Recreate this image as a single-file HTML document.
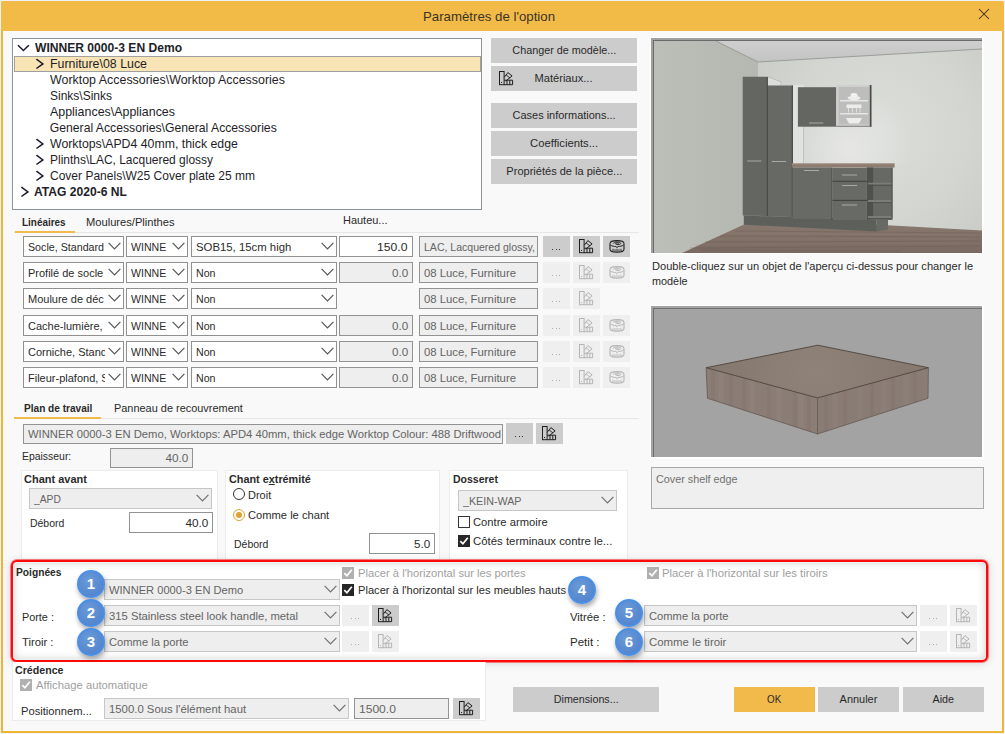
<!DOCTYPE html>
<html><head><meta charset="utf-8">
<style>
*{box-sizing:border-box;margin:0;padding:0}
html,body{width:1005px;height:734px;overflow:hidden;background:#eff2f9;font-family:"Liberation Sans",sans-serif;color:#2a2a2a;font-size:12px}
.a{position:absolute}
.t{position:absolute;white-space:nowrap;line-height:16px;font-size:12px;color:#2a2a2a}
</style></head><body>
<div class="a" style="left:1px;top:1px;width:1003px;height:732px;background:#f9f9f9;border:2px solid #f0b535;border-top:0;border-radius:2px 2px 0 0"></div>
<div class="a" style="left:1px;top:1px;width:1003px;height:30px;background:#f2bb48;border-radius:2px 2px 0 0"></div>

<div class="t" style="left:423px;top:9.00px;font-size:13px;color:#3a3328;"><span id="s0" style="display:inline-block;transform:scaleX(1.018);transform-origin:0 50%">Paramètres de l'option</span></div>
<svg class="a" style="left:978px;top:8px" width="12" height="12" viewBox="0 0 12 12"><path d="M1 1L11 11M11 1L1 11" stroke="#3a2a20" stroke-width="1.05"/></svg>
<div class="a" style="left:12px;top:38px;width:470px;height:172px;background:#fff;border:1px solid #8e939b"></div>
<div class="a" style="left:14px;top:56px;width:467px;height:16px;background:#f9e4b5;border:1px solid #a0a0a0"></div>
<svg class="a" style="left:17px;top:41px" width="13" height="13" viewBox="0 0 13 13"><path d="M1 4.3L6.4 9.5L11.8 4.3" fill="none" stroke="#1a1a2a" stroke-width="1.5"/></svg>
<div class="t" style="left:34.5px;top:40.14px;font-size:12px;font-weight:bold;color:#1e1e28;"><span id="s1" style="display:inline-block;transform:scaleX(1.007);transform-origin:0 50%">WINNER 0000-3 EN Demo</span></div>
<svg class="a" style="left:32px;top:57px" width="13" height="13" viewBox="0 0 13 13"><path d="M4.4 2.2L10.9 6.9L4.4 11.5" fill="none" stroke="#1a1a2a" stroke-width="1.5"/></svg>
<div class="t" style="left:49.8px;top:56.27px;font-size:12.2px;color:#1e1e28;"><span id="s2" style="display:inline-block;transform:scaleX(1.015);transform-origin:0 50%">Furniture\08 Luce</span></div>
<div class="t" style="left:49.8px;top:72.27px;font-size:12.2px;color:#1e1e28;"><span id="s3" style="display:inline-block;transform:scaleX(1.019);transform-origin:0 50%">Worktop Accessories\Worktop Accessories</span></div>
<div class="t" style="left:49.8px;top:88.27px;font-size:12.2px;color:#1e1e28;"><span id="s4" style="display:inline-block;transform:scaleX(0.984);transform-origin:0 50%">Sinks\Sinks</span></div>
<div class="t" style="left:49.8px;top:104.27px;font-size:12.2px;color:#1e1e28;"><span id="s5" style="display:inline-block;transform:scaleX(1.019);transform-origin:0 50%">Appliances\Appliances</span></div>
<div class="t" style="left:49.8px;top:120.27px;font-size:12.2px;color:#1e1e28;"><span id="s6" style="display:inline-block;transform:scaleX(1.000);transform-origin:0 50%">General Accessories\General Accessories</span></div>
<svg class="a" style="left:32px;top:137px" width="13" height="13" viewBox="0 0 13 13"><path d="M4.4 2.2L10.9 6.9L4.4 11.5" fill="none" stroke="#1a1a2a" stroke-width="1.5"/></svg>
<div class="t" style="left:49.8px;top:136.27px;font-size:12.2px;color:#1e1e28;"><span id="s7" style="display:inline-block;transform:scaleX(1.010);transform-origin:0 50%">Worktops\APD4 40mm, thick edge</span></div>
<svg class="a" style="left:32px;top:153px" width="13" height="13" viewBox="0 0 13 13"><path d="M4.4 2.2L10.9 6.9L4.4 11.5" fill="none" stroke="#1a1a2a" stroke-width="1.5"/></svg>
<div class="t" style="left:49.8px;top:152.27px;font-size:12.2px;color:#1e1e28;"><span id="s8" style="display:inline-block;transform:scaleX(0.982);transform-origin:0 50%">Plinths\LAC, Lacquered glossy</span></div>
<svg class="a" style="left:32px;top:169px" width="13" height="13" viewBox="0 0 13 13"><path d="M4.4 2.2L10.9 6.9L4.4 11.5" fill="none" stroke="#1a1a2a" stroke-width="1.5"/></svg>
<div class="t" style="left:49.8px;top:168.27px;font-size:12.2px;color:#1e1e28;"><span id="s9" style="display:inline-block;transform:scaleX(0.986);transform-origin:0 50%">Cover Panels\W25 Cover plate 25 mm</span></div>
<svg class="a" style="left:17px;top:185px" width="13" height="13" viewBox="0 0 13 13"><path d="M4.4 2.2L10.9 6.9L4.4 11.5" fill="none" stroke="#1a1a2a" stroke-width="1.5"/></svg>
<div class="t" style="left:34px;top:184.14px;font-size:12px;font-weight:bold;color:#1e1e28;"><span id="s10" style="display:inline-block;transform:scaleX(1.008);transform-origin:0 50%">ATAG 2020-6 NL</span></div>
<div class="a" style="left:491px;top:38px;width:146px;height:25px;background:#cccccc"></div>
<div class="t" style="left:491px;width:146px;text-align:center;top:42.08px;font-size:11.3px;color:#2a2a2a"><span id="s11" style="display:inline-block;transform:scaleX(0.957);transform-origin:50% 50%">Changer de modèle...</span></div>
<div class="a" style="left:491px;top:66px;width:146px;height:25px;background:#cccccc"></div>
<div class="t" style="left:491px;width:146px;text-align:center;top:70.08px;font-size:11.3px;color:#2a2a2a"><span id="s12" style="display:inline-block;transform:scaleX(0.983);transform-origin:50% 50%">Matériaux...</span></div>
<svg class="a" style="left:499px;top:71px" width="15" height="15" viewBox="0 0 15 15"><rect x="0.5" y="0.5" width="4.6" height="13.2" fill="none" stroke="#1e1e1e" stroke-width="1"/><rect x="2" y="11" width="1" height="1" fill="#1e1e1e"/><path d="M5.1 6.4L8.9 1.6L13.1 4.9L6.6 10.2" fill="none" stroke="#1e1e1e" stroke-width="1"/><path d="M7.1 3.9L11.1 7.1" stroke="#1e1e1e" stroke-width="0.9"/><path d="M5.1 9.2H13.6V13.7H5.1M8 9.4V13.6M10.8 9.4V13.6" fill="none" stroke="#1e1e1e" stroke-width="1"/></svg>
<div class="a" style="left:491px;top:103px;width:146px;height:25px;background:#cccccc"></div>
<div class="t" style="left:491px;width:146px;text-align:center;top:107.08px;font-size:11.3px;color:#2a2a2a"><span id="s13" style="display:inline-block;transform:scaleX(0.971);transform-origin:50% 50%">Cases informations...</span></div>
<div class="a" style="left:491px;top:131px;width:146px;height:25px;background:#cccccc"></div>
<div class="t" style="left:491px;width:146px;text-align:center;top:135.08px;font-size:11.3px;color:#2a2a2a"><span id="s14" style="display:inline-block;transform:scaleX(0.997);transform-origin:50% 50%">Coefficients...</span></div>
<div class="a" style="left:491px;top:159px;width:146px;height:25px;background:#cccccc"></div>
<div class="t" style="left:491px;width:146px;text-align:center;top:163.08px;font-size:11.3px;color:#2a2a2a"><span id="s15" style="display:inline-block;transform:scaleX(0.977);transform-origin:50% 50%">Propriétés de la pièce...</span></div>
<div class="t" style="left:22.3px;top:213.94px;font-size:11px;font-weight:bold;"><span id="s16" style="display:inline-block;transform:scaleX(0.902);transform-origin:0 50%">Linéaires</span></div>
<div class="t" style="left:86.4px;top:213.94px;font-size:11px;"><span id="s17" style="display:inline-block;transform:scaleX(1.013);transform-origin:0 50%">Moulures/Plinthes</span></div>
<div class="t" style="left:342.7px;top:211.94px;font-size:11px;"><span id="s18" style="display:inline-block;transform:scaleX(0.997);transform-origin:0 50%">Hauteu...</span></div>
<div class="a" style="left:14px;top:232px;width:625px;height:1px;background:#e6e6e6"></div>
<div class="a" style="left:15px;top:231px;width:60px;height:2px;background:#f2b94b"></div>
<div class="a" style="left:23px;top:236px;width:101px;height:21px;background:#ffffff;border:1px solid #909090"></div>
<div class="t" style="left:28px;top:238.69px;font-size:11px;color:#2a2a2a;width:77px;overflow:hidden"><span id="s19" style="display:inline-block;transform:scaleX(0.971);transform-origin:0 50%">Socle, Standard</span></div>
<svg class="a" style="left:108px;top:242.3px" width="13" height="8" viewBox="0 0 13 8"><path d="M0.6 0.8L6.5 6.8L12.4 0.8" fill="none" stroke="#555" stroke-width="1.2"/></svg>
<div class="a" style="left:126px;top:236px;width:62px;height:21px;background:#ffffff;border:1px solid #909090"></div>
<div class="t" style="left:131px;top:238.69px;font-size:11px;color:#2a2a2a;width:40px;overflow:hidden"><span id="s20" style="display:inline-block;transform:scaleX(0.963);transform-origin:0 50%">WINNE</span></div>
<svg class="a" style="left:172px;top:242.3px" width="13" height="8" viewBox="0 0 13 8"><path d="M0.6 0.8L6.5 6.8L12.4 0.8" fill="none" stroke="#555" stroke-width="1.2"/></svg>
<div class="a" style="left:191px;top:236px;width:146px;height:21px;background:#ffffff;border:1px solid #909090"></div>
<div class="t" style="left:196px;top:238.69px;font-size:11px;color:#2a2a2a;width:124px;overflow:hidden"><span id="s21" style="display:inline-block;transform:scaleX(1.032);transform-origin:0 50%">SOB15, 15cm high</span></div>
<svg class="a" style="left:321px;top:242.3px" width="13" height="8" viewBox="0 0 13 8"><path d="M0.6 0.8L6.5 6.8L12.4 0.8" fill="none" stroke="#555" stroke-width="1.2"/></svg>
<div class="a" style="left:339px;top:236px;width:74px;height:21px;background:#ffffff;border:1px solid #939393"></div>
<div class="t" style="left:339px;width:69px;text-align:right;top:238.69px;font-size:11px;color:#2a2a2a"><span id="s22" style="display:inline-block;transform:scaleX(1.108);transform-origin:100% 50%">150.0</span></div>
<div class="a" style="left:419px;top:236px;width:119px;height:21px;background:#eeeeee;border:1px solid #939393"></div>
<div class="t" style="left:424px;width:112px;overflow:hidden;top:238.69px;font-size:11px;color:#646464"><span id="s23" style="display:inline-block;transform:scaleX(0.957);transform-origin:0 50%">LAC, Lacquered glossy,</span></div>
<div class="a" style="left:543px;top:236px;width:27px;height:21px;background:#cccccc"></div>
<div class="a" style="left:552.0px;top:249px;width:1.2px;height:1.2px;background:#3a3a3a"></div>
<div class="a" style="left:555.5px;top:249px;width:1.2px;height:1.2px;background:#3a3a3a"></div>
<div class="a" style="left:559.0px;top:249px;width:1.2px;height:1.2px;background:#3a3a3a"></div>
<div class="a" style="left:573px;top:236px;width:27px;height:21px;background:#cccccc"></div>
<svg class="a" style="left:579px;top:239.0px" width="15" height="15" viewBox="0 0 15 15"><rect x="0.5" y="0.5" width="4.6" height="13.2" fill="none" stroke="#1e1e1e" stroke-width="1"/><rect x="2" y="11" width="1" height="1" fill="#1e1e1e"/><path d="M5.1 6.4L8.9 1.6L13.1 4.9L6.6 10.2" fill="none" stroke="#1e1e1e" stroke-width="1"/><path d="M7.1 3.9L11.1 7.1" stroke="#1e1e1e" stroke-width="0.9"/><path d="M5.1 9.2H13.6V13.7H5.1M8 9.4V13.6M10.8 9.4V13.6" fill="none" stroke="#1e1e1e" stroke-width="1"/></svg>
<div class="a" style="left:603px;top:236px;width:27px;height:21px;background:#cccccc"></div>
<svg class="a" style="left:609px;top:239px" width="16" height="14" viewBox="0 0 16 14"><path d="M1 4.5C1 0.6 15 0.6 15 4.5" fill="none" stroke="#1e1e1e" stroke-width="1.1"/><path d="M1 4.5V10.3C1 12.8 4 13.3 8 13.3C12 13.3 15 12.8 15 10.3V4.5" fill="none" stroke="#1e1e1e" stroke-width="1.1"/><path d="M1.4 6C3 7.2 5.5 7.5 6.8 7.5L8 8.6L9.2 7.5C10.5 7.5 13 7.2 14.6 6" fill="none" stroke="#1e1e1e" stroke-width="1"/><path d="M4.3 4.6C4.3 2.5 11.7 2.5 11.7 4.4C11.7 5.9 6.4 6.1 6.4 4.5C6.4 3.9 9.1 3.8 9.6 4.4" fill="none" stroke="#1e1e1e" stroke-width="1"/><path d="M4 9.8V12.2M6 10.3V12.8M8 9.8V13M10 10.3V12.8M12 9.8V12.2" stroke="#1e1e1e" stroke-width="0.9"/></svg>
<div class="a" style="left:23px;top:262px;width:101px;height:21px;background:#ffffff;border:1px solid #909090"></div>
<div class="t" style="left:28px;top:264.69px;font-size:11px;color:#2a2a2a;width:77px;overflow:hidden">Profilé de socle</div>
<svg class="a" style="left:108px;top:268.3px" width="13" height="8" viewBox="0 0 13 8"><path d="M0.6 0.8L6.5 6.8L12.4 0.8" fill="none" stroke="#555" stroke-width="1.2"/></svg>
<div class="a" style="left:126px;top:262px;width:62px;height:21px;background:#ffffff;border:1px solid #909090"></div>
<div class="t" style="left:131px;top:264.69px;font-size:11px;color:#2a2a2a;width:40px;overflow:hidden"><span id="s24" style="display:inline-block;transform:scaleX(0.963);transform-origin:0 50%">WINNE</span></div>
<svg class="a" style="left:172px;top:268.3px" width="13" height="8" viewBox="0 0 13 8"><path d="M0.6 0.8L6.5 6.8L12.4 0.8" fill="none" stroke="#555" stroke-width="1.2"/></svg>
<div class="a" style="left:191px;top:262px;width:146px;height:21px;background:#ffffff;border:1px solid #909090"></div>
<div class="t" style="left:196px;top:264.69px;font-size:11px;color:#2a2a2a;width:124px;overflow:hidden"><span id="s25" style="display:inline-block;transform:scaleX(0.966);transform-origin:0 50%">Non</span></div>
<svg class="a" style="left:321px;top:268.3px" width="13" height="8" viewBox="0 0 13 8"><path d="M0.6 0.8L6.5 6.8L12.4 0.8" fill="none" stroke="#555" stroke-width="1.2"/></svg>
<div class="a" style="left:339px;top:262px;width:74px;height:21px;background:#eeeeee;border:1px solid #939393"></div>
<div class="t" style="left:339px;width:69px;text-align:right;top:264.69px;font-size:11px;color:#646464"><span id="s26" style="display:inline-block;transform:scaleX(1.059);transform-origin:100% 50%">0.0</span></div>
<div class="a" style="left:419px;top:262px;width:119px;height:21px;background:#eeeeee;border:1px solid #939393"></div>
<div class="t" style="left:424px;width:112px;overflow:hidden;top:264.69px;font-size:11px;color:#646464"><span id="s27" style="display:inline-block;transform:scaleX(1.030);transform-origin:0 50%">08 Luce, Furniture</span></div>
<div class="a" style="left:543px;top:262px;width:27px;height:21px;background:#efefef"></div>
<div class="a" style="left:552.0px;top:275px;width:1.2px;height:1.2px;background:#b0b0b0"></div>
<div class="a" style="left:555.5px;top:275px;width:1.2px;height:1.2px;background:#b0b0b0"></div>
<div class="a" style="left:559.0px;top:275px;width:1.2px;height:1.2px;background:#b0b0b0"></div>
<div class="a" style="left:573px;top:262px;width:27px;height:21px;background:#efefef"></div>
<svg class="a" style="left:579px;top:265.0px" width="15" height="15" viewBox="0 0 15 15"><rect x="0.5" y="0.5" width="4.6" height="13.2" fill="none" stroke="#b4b4b4" stroke-width="1"/><rect x="2" y="11" width="1" height="1" fill="#b4b4b4"/><path d="M5.1 6.4L8.9 1.6L13.1 4.9L6.6 10.2" fill="none" stroke="#b4b4b4" stroke-width="1"/><path d="M7.1 3.9L11.1 7.1" stroke="#b4b4b4" stroke-width="0.9"/><path d="M5.1 9.2H13.6V13.7H5.1M8 9.4V13.6M10.8 9.4V13.6" fill="none" stroke="#b4b4b4" stroke-width="1"/></svg>
<div class="a" style="left:603px;top:262px;width:27px;height:21px;background:#efefef"></div>
<svg class="a" style="left:609px;top:265px" width="16" height="14" viewBox="0 0 16 14"><path d="M1 4.5C1 0.6 15 0.6 15 4.5" fill="none" stroke="#b4b4b4" stroke-width="1.1"/><path d="M1 4.5V10.3C1 12.8 4 13.3 8 13.3C12 13.3 15 12.8 15 10.3V4.5" fill="none" stroke="#b4b4b4" stroke-width="1.1"/><path d="M1.4 6C3 7.2 5.5 7.5 6.8 7.5L8 8.6L9.2 7.5C10.5 7.5 13 7.2 14.6 6" fill="none" stroke="#b4b4b4" stroke-width="1"/><path d="M4.3 4.6C4.3 2.5 11.7 2.5 11.7 4.4C11.7 5.9 6.4 6.1 6.4 4.5C6.4 3.9 9.1 3.8 9.6 4.4" fill="none" stroke="#b4b4b4" stroke-width="1"/><path d="M4 9.8V12.2M6 10.3V12.8M8 9.8V13M10 10.3V12.8M12 9.8V12.2" stroke="#b4b4b4" stroke-width="0.9"/></svg>
<div class="a" style="left:23px;top:288px;width:101px;height:21px;background:#ffffff;border:1px solid #909090"></div>
<div class="t" style="left:28px;top:290.69px;font-size:11px;color:#2a2a2a;width:77px;overflow:hidden">Moulure de déc</div>
<svg class="a" style="left:108px;top:294.3px" width="13" height="8" viewBox="0 0 13 8"><path d="M0.6 0.8L6.5 6.8L12.4 0.8" fill="none" stroke="#555" stroke-width="1.2"/></svg>
<div class="a" style="left:126px;top:288px;width:62px;height:21px;background:#ffffff;border:1px solid #909090"></div>
<div class="t" style="left:131px;top:290.69px;font-size:11px;color:#2a2a2a;width:40px;overflow:hidden"><span id="s28" style="display:inline-block;transform:scaleX(0.963);transform-origin:0 50%">WINNE</span></div>
<svg class="a" style="left:172px;top:294.3px" width="13" height="8" viewBox="0 0 13 8"><path d="M0.6 0.8L6.5 6.8L12.4 0.8" fill="none" stroke="#555" stroke-width="1.2"/></svg>
<div class="a" style="left:191px;top:288px;width:146px;height:21px;background:#ffffff;border:1px solid #909090"></div>
<div class="t" style="left:196px;top:290.69px;font-size:11px;color:#2a2a2a;width:124px;overflow:hidden"><span id="s29" style="display:inline-block;transform:scaleX(0.966);transform-origin:0 50%">Non</span></div>
<svg class="a" style="left:321px;top:294.3px" width="13" height="8" viewBox="0 0 13 8"><path d="M0.6 0.8L6.5 6.8L12.4 0.8" fill="none" stroke="#555" stroke-width="1.2"/></svg>
<div class="a" style="left:419px;top:288px;width:119px;height:21px;background:#eeeeee;border:1px solid #939393"></div>
<div class="t" style="left:424px;width:112px;overflow:hidden;top:290.69px;font-size:11px;color:#646464"><span id="s30" style="display:inline-block;transform:scaleX(1.030);transform-origin:0 50%">08 Luce, Furniture</span></div>
<div class="a" style="left:543px;top:288px;width:27px;height:21px;background:#efefef"></div>
<div class="a" style="left:552.0px;top:301px;width:1.2px;height:1.2px;background:#b0b0b0"></div>
<div class="a" style="left:555.5px;top:301px;width:1.2px;height:1.2px;background:#b0b0b0"></div>
<div class="a" style="left:559.0px;top:301px;width:1.2px;height:1.2px;background:#b0b0b0"></div>
<div class="a" style="left:573px;top:288px;width:27px;height:21px;background:#efefef"></div>
<svg class="a" style="left:579px;top:291.0px" width="15" height="15" viewBox="0 0 15 15"><rect x="0.5" y="0.5" width="4.6" height="13.2" fill="none" stroke="#b4b4b4" stroke-width="1"/><rect x="2" y="11" width="1" height="1" fill="#b4b4b4"/><path d="M5.1 6.4L8.9 1.6L13.1 4.9L6.6 10.2" fill="none" stroke="#b4b4b4" stroke-width="1"/><path d="M7.1 3.9L11.1 7.1" stroke="#b4b4b4" stroke-width="0.9"/><path d="M5.1 9.2H13.6V13.7H5.1M8 9.4V13.6M10.8 9.4V13.6" fill="none" stroke="#b4b4b4" stroke-width="1"/></svg>
<div class="a" style="left:23px;top:315px;width:101px;height:21px;background:#ffffff;border:1px solid #909090"></div>
<div class="t" style="left:28px;top:317.69px;font-size:11px;color:#2a2a2a;width:77px;overflow:hidden">Cache-lumière,</div>
<svg class="a" style="left:108px;top:321.3px" width="13" height="8" viewBox="0 0 13 8"><path d="M0.6 0.8L6.5 6.8L12.4 0.8" fill="none" stroke="#555" stroke-width="1.2"/></svg>
<div class="a" style="left:126px;top:315px;width:62px;height:21px;background:#ffffff;border:1px solid #909090"></div>
<div class="t" style="left:131px;top:317.69px;font-size:11px;color:#2a2a2a;width:40px;overflow:hidden"><span id="s31" style="display:inline-block;transform:scaleX(0.963);transform-origin:0 50%">WINNE</span></div>
<svg class="a" style="left:172px;top:321.3px" width="13" height="8" viewBox="0 0 13 8"><path d="M0.6 0.8L6.5 6.8L12.4 0.8" fill="none" stroke="#555" stroke-width="1.2"/></svg>
<div class="a" style="left:191px;top:315px;width:146px;height:21px;background:#ffffff;border:1px solid #909090"></div>
<div class="t" style="left:196px;top:317.69px;font-size:11px;color:#2a2a2a;width:124px;overflow:hidden"><span id="s32" style="display:inline-block;transform:scaleX(0.966);transform-origin:0 50%">Non</span></div>
<svg class="a" style="left:321px;top:321.3px" width="13" height="8" viewBox="0 0 13 8"><path d="M0.6 0.8L6.5 6.8L12.4 0.8" fill="none" stroke="#555" stroke-width="1.2"/></svg>
<div class="a" style="left:339px;top:315px;width:74px;height:21px;background:#eeeeee;border:1px solid #939393"></div>
<div class="t" style="left:339px;width:69px;text-align:right;top:317.69px;font-size:11px;color:#646464"><span id="s33" style="display:inline-block;transform:scaleX(1.059);transform-origin:100% 50%">0.0</span></div>
<div class="a" style="left:419px;top:315px;width:119px;height:21px;background:#eeeeee;border:1px solid #939393"></div>
<div class="t" style="left:424px;width:112px;overflow:hidden;top:317.69px;font-size:11px;color:#646464"><span id="s34" style="display:inline-block;transform:scaleX(1.030);transform-origin:0 50%">08 Luce, Furniture</span></div>
<div class="a" style="left:543px;top:315px;width:27px;height:21px;background:#efefef"></div>
<div class="a" style="left:552.0px;top:328px;width:1.2px;height:1.2px;background:#b0b0b0"></div>
<div class="a" style="left:555.5px;top:328px;width:1.2px;height:1.2px;background:#b0b0b0"></div>
<div class="a" style="left:559.0px;top:328px;width:1.2px;height:1.2px;background:#b0b0b0"></div>
<div class="a" style="left:573px;top:315px;width:27px;height:21px;background:#efefef"></div>
<svg class="a" style="left:579px;top:318.0px" width="15" height="15" viewBox="0 0 15 15"><rect x="0.5" y="0.5" width="4.6" height="13.2" fill="none" stroke="#b4b4b4" stroke-width="1"/><rect x="2" y="11" width="1" height="1" fill="#b4b4b4"/><path d="M5.1 6.4L8.9 1.6L13.1 4.9L6.6 10.2" fill="none" stroke="#b4b4b4" stroke-width="1"/><path d="M7.1 3.9L11.1 7.1" stroke="#b4b4b4" stroke-width="0.9"/><path d="M5.1 9.2H13.6V13.7H5.1M8 9.4V13.6M10.8 9.4V13.6" fill="none" stroke="#b4b4b4" stroke-width="1"/></svg>
<div class="a" style="left:603px;top:315px;width:27px;height:21px;background:#efefef"></div>
<svg class="a" style="left:609px;top:318px" width="16" height="14" viewBox="0 0 16 14"><path d="M1 4.5C1 0.6 15 0.6 15 4.5" fill="none" stroke="#b4b4b4" stroke-width="1.1"/><path d="M1 4.5V10.3C1 12.8 4 13.3 8 13.3C12 13.3 15 12.8 15 10.3V4.5" fill="none" stroke="#b4b4b4" stroke-width="1.1"/><path d="M1.4 6C3 7.2 5.5 7.5 6.8 7.5L8 8.6L9.2 7.5C10.5 7.5 13 7.2 14.6 6" fill="none" stroke="#b4b4b4" stroke-width="1"/><path d="M4.3 4.6C4.3 2.5 11.7 2.5 11.7 4.4C11.7 5.9 6.4 6.1 6.4 4.5C6.4 3.9 9.1 3.8 9.6 4.4" fill="none" stroke="#b4b4b4" stroke-width="1"/><path d="M4 9.8V12.2M6 10.3V12.8M8 9.8V13M10 10.3V12.8M12 9.8V12.2" stroke="#b4b4b4" stroke-width="0.9"/></svg>
<div class="a" style="left:23px;top:341px;width:101px;height:21px;background:#ffffff;border:1px solid #909090"></div>
<div class="t" style="left:28px;top:343.69px;font-size:11px;color:#2a2a2a;width:77px;overflow:hidden">Corniche, Standard</div>
<svg class="a" style="left:108px;top:347.3px" width="13" height="8" viewBox="0 0 13 8"><path d="M0.6 0.8L6.5 6.8L12.4 0.8" fill="none" stroke="#555" stroke-width="1.2"/></svg>
<div class="a" style="left:126px;top:341px;width:62px;height:21px;background:#ffffff;border:1px solid #909090"></div>
<div class="t" style="left:131px;top:343.69px;font-size:11px;color:#2a2a2a;width:40px;overflow:hidden"><span id="s35" style="display:inline-block;transform:scaleX(0.963);transform-origin:0 50%">WINNE</span></div>
<svg class="a" style="left:172px;top:347.3px" width="13" height="8" viewBox="0 0 13 8"><path d="M0.6 0.8L6.5 6.8L12.4 0.8" fill="none" stroke="#555" stroke-width="1.2"/></svg>
<div class="a" style="left:191px;top:341px;width:146px;height:21px;background:#ffffff;border:1px solid #909090"></div>
<div class="t" style="left:196px;top:343.69px;font-size:11px;color:#2a2a2a;width:124px;overflow:hidden"><span id="s36" style="display:inline-block;transform:scaleX(0.966);transform-origin:0 50%">Non</span></div>
<svg class="a" style="left:321px;top:347.3px" width="13" height="8" viewBox="0 0 13 8"><path d="M0.6 0.8L6.5 6.8L12.4 0.8" fill="none" stroke="#555" stroke-width="1.2"/></svg>
<div class="a" style="left:339px;top:341px;width:74px;height:21px;background:#eeeeee;border:1px solid #939393"></div>
<div class="t" style="left:339px;width:69px;text-align:right;top:343.69px;font-size:11px;color:#646464"><span id="s37" style="display:inline-block;transform:scaleX(1.059);transform-origin:100% 50%">0.0</span></div>
<div class="a" style="left:419px;top:341px;width:119px;height:21px;background:#eeeeee;border:1px solid #939393"></div>
<div class="t" style="left:424px;width:112px;overflow:hidden;top:343.69px;font-size:11px;color:#646464"><span id="s38" style="display:inline-block;transform:scaleX(1.030);transform-origin:0 50%">08 Luce, Furniture</span></div>
<div class="a" style="left:543px;top:341px;width:27px;height:21px;background:#efefef"></div>
<div class="a" style="left:552.0px;top:354px;width:1.2px;height:1.2px;background:#b0b0b0"></div>
<div class="a" style="left:555.5px;top:354px;width:1.2px;height:1.2px;background:#b0b0b0"></div>
<div class="a" style="left:559.0px;top:354px;width:1.2px;height:1.2px;background:#b0b0b0"></div>
<div class="a" style="left:573px;top:341px;width:27px;height:21px;background:#efefef"></div>
<svg class="a" style="left:579px;top:344.0px" width="15" height="15" viewBox="0 0 15 15"><rect x="0.5" y="0.5" width="4.6" height="13.2" fill="none" stroke="#b4b4b4" stroke-width="1"/><rect x="2" y="11" width="1" height="1" fill="#b4b4b4"/><path d="M5.1 6.4L8.9 1.6L13.1 4.9L6.6 10.2" fill="none" stroke="#b4b4b4" stroke-width="1"/><path d="M7.1 3.9L11.1 7.1" stroke="#b4b4b4" stroke-width="0.9"/><path d="M5.1 9.2H13.6V13.7H5.1M8 9.4V13.6M10.8 9.4V13.6" fill="none" stroke="#b4b4b4" stroke-width="1"/></svg>
<div class="a" style="left:603px;top:341px;width:27px;height:21px;background:#efefef"></div>
<svg class="a" style="left:609px;top:344px" width="16" height="14" viewBox="0 0 16 14"><path d="M1 4.5C1 0.6 15 0.6 15 4.5" fill="none" stroke="#b4b4b4" stroke-width="1.1"/><path d="M1 4.5V10.3C1 12.8 4 13.3 8 13.3C12 13.3 15 12.8 15 10.3V4.5" fill="none" stroke="#b4b4b4" stroke-width="1.1"/><path d="M1.4 6C3 7.2 5.5 7.5 6.8 7.5L8 8.6L9.2 7.5C10.5 7.5 13 7.2 14.6 6" fill="none" stroke="#b4b4b4" stroke-width="1"/><path d="M4.3 4.6C4.3 2.5 11.7 2.5 11.7 4.4C11.7 5.9 6.4 6.1 6.4 4.5C6.4 3.9 9.1 3.8 9.6 4.4" fill="none" stroke="#b4b4b4" stroke-width="1"/><path d="M4 9.8V12.2M6 10.3V12.8M8 9.8V13M10 10.3V12.8M12 9.8V12.2" stroke="#b4b4b4" stroke-width="0.9"/></svg>
<div class="a" style="left:23px;top:367px;width:101px;height:21px;background:#ffffff;border:1px solid #909090"></div>
<div class="t" style="left:28px;top:369.69px;font-size:11px;color:#2a2a2a;width:77px;overflow:hidden">Fileur-plafond, Standard</div>
<svg class="a" style="left:108px;top:373.3px" width="13" height="8" viewBox="0 0 13 8"><path d="M0.6 0.8L6.5 6.8L12.4 0.8" fill="none" stroke="#555" stroke-width="1.2"/></svg>
<div class="a" style="left:126px;top:367px;width:62px;height:21px;background:#ffffff;border:1px solid #909090"></div>
<div class="t" style="left:131px;top:369.69px;font-size:11px;color:#2a2a2a;width:40px;overflow:hidden"><span id="s39" style="display:inline-block;transform:scaleX(0.963);transform-origin:0 50%">WINNE</span></div>
<svg class="a" style="left:172px;top:373.3px" width="13" height="8" viewBox="0 0 13 8"><path d="M0.6 0.8L6.5 6.8L12.4 0.8" fill="none" stroke="#555" stroke-width="1.2"/></svg>
<div class="a" style="left:191px;top:367px;width:146px;height:21px;background:#ffffff;border:1px solid #909090"></div>
<div class="t" style="left:196px;top:369.69px;font-size:11px;color:#2a2a2a;width:124px;overflow:hidden"><span id="s40" style="display:inline-block;transform:scaleX(0.966);transform-origin:0 50%">Non</span></div>
<svg class="a" style="left:321px;top:373.3px" width="13" height="8" viewBox="0 0 13 8"><path d="M0.6 0.8L6.5 6.8L12.4 0.8" fill="none" stroke="#555" stroke-width="1.2"/></svg>
<div class="a" style="left:339px;top:367px;width:74px;height:21px;background:#eeeeee;border:1px solid #939393"></div>
<div class="t" style="left:339px;width:69px;text-align:right;top:369.69px;font-size:11px;color:#646464"><span id="s41" style="display:inline-block;transform:scaleX(1.059);transform-origin:100% 50%">0.0</span></div>
<div class="a" style="left:419px;top:367px;width:119px;height:21px;background:#eeeeee;border:1px solid #939393"></div>
<div class="t" style="left:424px;width:112px;overflow:hidden;top:369.69px;font-size:11px;color:#646464"><span id="s42" style="display:inline-block;transform:scaleX(1.030);transform-origin:0 50%">08 Luce, Furniture</span></div>
<div class="a" style="left:543px;top:367px;width:27px;height:21px;background:#efefef"></div>
<div class="a" style="left:552.0px;top:380px;width:1.2px;height:1.2px;background:#b0b0b0"></div>
<div class="a" style="left:555.5px;top:380px;width:1.2px;height:1.2px;background:#b0b0b0"></div>
<div class="a" style="left:559.0px;top:380px;width:1.2px;height:1.2px;background:#b0b0b0"></div>
<div class="a" style="left:573px;top:367px;width:27px;height:21px;background:#efefef"></div>
<svg class="a" style="left:579px;top:370.0px" width="15" height="15" viewBox="0 0 15 15"><rect x="0.5" y="0.5" width="4.6" height="13.2" fill="none" stroke="#b4b4b4" stroke-width="1"/><rect x="2" y="11" width="1" height="1" fill="#b4b4b4"/><path d="M5.1 6.4L8.9 1.6L13.1 4.9L6.6 10.2" fill="none" stroke="#b4b4b4" stroke-width="1"/><path d="M7.1 3.9L11.1 7.1" stroke="#b4b4b4" stroke-width="0.9"/><path d="M5.1 9.2H13.6V13.7H5.1M8 9.4V13.6M10.8 9.4V13.6" fill="none" stroke="#b4b4b4" stroke-width="1"/></svg>
<div class="a" style="left:603px;top:367px;width:27px;height:21px;background:#efefef"></div>
<svg class="a" style="left:609px;top:370px" width="16" height="14" viewBox="0 0 16 14"><path d="M1 4.5C1 0.6 15 0.6 15 4.5" fill="none" stroke="#b4b4b4" stroke-width="1.1"/><path d="M1 4.5V10.3C1 12.8 4 13.3 8 13.3C12 13.3 15 12.8 15 10.3V4.5" fill="none" stroke="#b4b4b4" stroke-width="1.1"/><path d="M1.4 6C3 7.2 5.5 7.5 6.8 7.5L8 8.6L9.2 7.5C10.5 7.5 13 7.2 14.6 6" fill="none" stroke="#b4b4b4" stroke-width="1"/><path d="M4.3 4.6C4.3 2.5 11.7 2.5 11.7 4.4C11.7 5.9 6.4 6.1 6.4 4.5C6.4 3.9 9.1 3.8 9.6 4.4" fill="none" stroke="#b4b4b4" stroke-width="1"/><path d="M4 9.8V12.2M6 10.3V12.8M8 9.8V13M10 10.3V12.8M12 9.8V12.2" stroke="#b4b4b4" stroke-width="0.9"/></svg>
<div class="t" style="left:23.6px;top:400.24px;font-size:11px;font-weight:bold;"><span id="s43" style="display:inline-block;transform:scaleX(0.917);transform-origin:0 50%">Plan de travail</span></div>
<div class="t" style="left:114.4px;top:400.24px;font-size:11px;"><span id="s44" style="display:inline-block;transform:scaleX(0.994);transform-origin:0 50%">Panneau de recouvrement</span></div>
<div class="a" style="left:14px;top:418px;width:625px;height:1px;background:#e6e6e6"></div>
<div class="a" style="left:14px;top:417px;width:87px;height:2px;background:#f2b94b"></div>
<div class="a" style="left:23px;top:424px;width:480px;height:20px;background:#eeeeee;border:1px solid #939393"></div>
<div class="t" style="left:28px;width:473px;overflow:hidden;top:426.19px;font-size:11px;color:#646464"><span id="s45" style="display:inline-block;transform:scaleX(1.023);transform-origin:0 50%">WINNER 0000-3 EN Demo, Worktops: APD4 40mm, thick edge Worktop Colour: 488 Driftwood</span></div>
<div class="a" style="left:506px;top:423px;width:27px;height:21px;background:#cccccc"></div>
<div class="a" style="left:515.0px;top:436px;width:1.2px;height:1.2px;background:#3a3a3a"></div>
<div class="a" style="left:518.5px;top:436px;width:1.2px;height:1.2px;background:#3a3a3a"></div>
<div class="a" style="left:522.0px;top:436px;width:1.2px;height:1.2px;background:#3a3a3a"></div>
<div class="a" style="left:536px;top:423px;width:27px;height:21px;background:#cccccc"></div>
<svg class="a" style="left:542px;top:426.0px" width="15" height="15" viewBox="0 0 15 15"><rect x="0.5" y="0.5" width="4.6" height="13.2" fill="none" stroke="#1e1e1e" stroke-width="1"/><rect x="2" y="11" width="1" height="1" fill="#1e1e1e"/><path d="M5.1 6.4L8.9 1.6L13.1 4.9L6.6 10.2" fill="none" stroke="#1e1e1e" stroke-width="1"/><path d="M7.1 3.9L11.1 7.1" stroke="#1e1e1e" stroke-width="0.9"/><path d="M5.1 9.2H13.6V13.7H5.1M8 9.4V13.6M10.8 9.4V13.6" fill="none" stroke="#1e1e1e" stroke-width="1"/></svg>
<div class="t" style="left:21.6px;top:448.44px;font-size:11px;"><span id="s46" style="display:inline-block;transform:scaleX(0.948);transform-origin:0 50%">Epaisseur:</span></div>
<div class="a" style="left:110px;top:448px;width:83px;height:20px;background:#eeeeee;border:1px solid #939393"></div>
<div class="t" style="left:110px;width:78px;text-align:right;top:450.19px;font-size:11px;color:#646464"><span id="s47" style="display:inline-block;transform:scaleX(1.069);transform-origin:100% 50%">40.0</span></div>
<div class="a" style="left:21px;top:470px;width:197px;height:90px;background:#fff;border:1px solid #ececec"></div>
<div class="a" style="left:225px;top:470px;width:215px;height:90px;background:#fff;border:1px solid #ececec"></div>
<div class="a" style="left:449px;top:470px;width:179px;height:90px;background:#fff;border:1px solid #ececec"></div>
<div class="t" style="left:24.2px;top:471.24px;font-size:11px;font-weight:bold;"><span id="s48" style="display:inline-block;transform:scaleX(0.999);transform-origin:0 50%">Chant avant</span></div>
<div class="a" style="left:29px;top:488px;width:183px;height:21px;background:#eeeeee;border:1px solid #c6c6c6"></div>
<div class="t" style="left:34px;top:490.69px;font-size:11px;color:#646464;width:161px;overflow:hidden"><span id="s49" style="display:inline-block;transform:scaleX(0.932);transform-origin:0 50%">_APD</span></div>
<svg class="a" style="left:196px;top:494.3px" width="13" height="8" viewBox="0 0 13 8"><path d="M0.6 0.8L6.5 6.8L12.4 0.8" fill="none" stroke="#707070" stroke-width="1.2"/></svg>
<div class="t" style="left:29.5px;top:515.24px;font-size:11px;"><span id="s50" style="display:inline-block;transform:scaleX(0.951);transform-origin:0 50%">Débord</span></div>
<div class="a" style="left:129px;top:512px;width:84px;height:21px;background:#ffffff;border:1px solid #939393"></div>
<div class="t" style="left:129px;width:79px;text-align:right;top:514.69px;font-size:11px;color:#2a2a2a"><span id="s51" style="display:inline-block;transform:scaleX(1.069);transform-origin:100% 50%">40.0</span></div>
<div class="t" style="left:228.6px;top:471.14px;font-size:11px;font-weight:bold;"><span id="s52" style="display:inline-block;transform:scaleX(0.985);transform-origin:0 50%">Chant e<u>x</u>trémité</span></div>
<div class="a" style="left:233px;top:488px;width:12px;height:12px;border-radius:50%;border:1px solid #333;background:#fff"></div>
<div class="t" style="left:248.4px;top:486.64px;font-size:11px;"><span id="s53" style="display:inline-block;transform:scaleX(0.999);transform-origin:0 50%">Droit</span></div>
<div class="a" style="left:233px;top:509px;width:12px;height:12px;border-radius:50%;border:1px solid #e0a030;background:#fff"></div>
<div class="a" style="left:236px;top:512px;width:6px;height:6px;border-radius:50%;background:#e0a030"></div>
<div class="t" style="left:248.4px;top:507.44px;font-size:11px;"><span id="s54" style="display:inline-block;transform:scaleX(1.014);transform-origin:0 50%">Comme le chant</span></div>
<div class="t" style="left:233.6px;top:536.24px;font-size:11px;"><span id="s55" style="display:inline-block;transform:scaleX(0.953);transform-origin:0 50%">Débord</span></div>
<div class="a" style="left:369px;top:533px;width:66px;height:21px;background:#ffffff;border:1px solid #939393"></div>
<div class="t" style="left:369px;width:61px;text-align:right;top:535.69px;font-size:11px;color:#2a2a2a"><span id="s56" style="display:inline-block;transform:scaleX(1.059);transform-origin:100% 50%">5.0</span></div>
<div class="t" style="left:452.8px;top:471.04px;font-size:11px;font-weight:bold;"><span id="s57" style="display:inline-block;transform:scaleX(0.954);transform-origin:0 50%">Dosseret</span></div>
<div class="a" style="left:458px;top:490px;width:159px;height:21px;background:#eeeeee;border:1px solid #c6c6c6"></div>
<div class="t" style="left:463px;top:492.69px;font-size:11px;color:#646464;width:137px;overflow:hidden"><span id="s58" style="display:inline-block;transform:scaleX(0.973);transform-origin:0 50%">_KEIN-WAP</span></div>
<svg class="a" style="left:601px;top:496.3px" width="13" height="8" viewBox="0 0 13 8"><path d="M0.6 0.8L6.5 6.8L12.4 0.8" fill="none" stroke="#707070" stroke-width="1.2"/></svg>
<div class="a" style="left:458px;top:516px;width:12px;height:12px;border:1px solid #333;background:#fff"></div>
<div class="t" style="left:473.2px;top:514.24px;font-size:11px;"><span id="s59" style="display:inline-block;transform:scaleX(1.017);transform-origin:0 50%">Contre armoire</span></div>
<svg class="a" style="left:458px;top:535px" width="12" height="12" viewBox="0 0 12 12"><rect width="12" height="12" fill="#262626"/><path d="M2.3 6.2L4.9 8.8L9.8 2.8" fill="none" stroke="#fff" stroke-width="1.7"/></svg>
<div class="t" style="left:473.2px;top:533.04px;font-size:11px;"><span id="s60" style="display:inline-block;transform:scaleX(1.036);transform-origin:0 50%">Côtés terminaux contre le...</span></div>
<div class="a" style="left:11px;top:560px;width:977px;height:102px;background:#fff;border:2px solid #ff0a0a;border-radius:6px;box-shadow:inset 0 0 0 1px #edf1f2, inset 0 0 10px rgba(0,0,0,0.2), 0 0 0 1px rgba(255,20,20,0.5), 0 1px 10px rgba(0,0,0,0.16)"></div>
<div class="t" style="left:15.6px;top:564.14px;font-size:11px;font-weight:bold;"><span id="s61" style="display:inline-block;transform:scaleX(0.930);transform-origin:0 50%">Poignées</span></div>
<div class="t" style="left:21.6px;top:609.24px;font-size:11px;"><span id="s62" style="display:inline-block;transform:scaleX(0.984);transform-origin:0 50%">Porte :</span></div>
<div class="t" style="left:21.6px;top:634.04px;font-size:11px;"><span id="s63" style="display:inline-block;transform:scaleX(1.024);transform-origin:0 50%">Tiroir :</span></div>
<div class="a" style="left:104px;top:579px;width:236px;height:21px;background:#eeeeee;border:1px solid #c6c6c6"></div>
<div class="t" style="left:109px;top:581.69px;font-size:11px;color:#646464;width:214px;overflow:hidden"><span id="s64" style="display:inline-block;transform:scaleX(1.012);transform-origin:0 50%">WINNER 0000-3 EN Demo</span></div>
<svg class="a" style="left:324px;top:585.3px" width="13" height="8" viewBox="0 0 13 8"><path d="M0.6 0.8L6.5 6.8L12.4 0.8" fill="none" stroke="#707070" stroke-width="1.2"/></svg>
<div class="a" style="left:104px;top:605px;width:236px;height:21px;background:#eeeeee;border:1px solid #c6c6c6"></div>
<div class="t" style="left:109px;top:607.69px;font-size:11px;color:#646464;width:214px;overflow:hidden"><span id="s65" style="display:inline-block;transform:scaleX(1.023);transform-origin:0 50%">315 Stainless steel look handle, metal</span></div>
<svg class="a" style="left:324px;top:611.3px" width="13" height="8" viewBox="0 0 13 8"><path d="M0.6 0.8L6.5 6.8L12.4 0.8" fill="none" stroke="#707070" stroke-width="1.2"/></svg>
<div class="a" style="left:104px;top:631px;width:236px;height:21px;background:#eeeeee;border:1px solid #c6c6c6"></div>
<div class="t" style="left:109px;top:633.69px;font-size:11px;color:#646464;width:214px;overflow:hidden"><span id="s66" style="display:inline-block;transform:scaleX(1.016);transform-origin:0 50%">Comme la porte</span></div>
<svg class="a" style="left:324px;top:637.3px" width="13" height="8" viewBox="0 0 13 8"><path d="M0.6 0.8L6.5 6.8L12.4 0.8" fill="none" stroke="#707070" stroke-width="1.2"/></svg>
<div class="a" style="left:342px;top:605px;width:27px;height:21px;background:#efefef"></div>
<div class="a" style="left:351.0px;top:618px;width:1.2px;height:1.2px;background:#b0b0b0"></div>
<div class="a" style="left:354.5px;top:618px;width:1.2px;height:1.2px;background:#b0b0b0"></div>
<div class="a" style="left:358.0px;top:618px;width:1.2px;height:1.2px;background:#b0b0b0"></div>
<div class="a" style="left:372px;top:605px;width:27px;height:21px;background:#cccccc"></div>
<svg class="a" style="left:378px;top:608.0px" width="15" height="15" viewBox="0 0 15 15"><rect x="0.5" y="0.5" width="4.6" height="13.2" fill="none" stroke="#1e1e1e" stroke-width="1"/><rect x="2" y="11" width="1" height="1" fill="#1e1e1e"/><path d="M5.1 6.4L8.9 1.6L13.1 4.9L6.6 10.2" fill="none" stroke="#1e1e1e" stroke-width="1"/><path d="M7.1 3.9L11.1 7.1" stroke="#1e1e1e" stroke-width="0.9"/><path d="M5.1 9.2H13.6V13.7H5.1M8 9.4V13.6M10.8 9.4V13.6" fill="none" stroke="#1e1e1e" stroke-width="1"/></svg>
<div class="a" style="left:342px;top:631px;width:27px;height:21px;background:#efefef"></div>
<div class="a" style="left:351.0px;top:644px;width:1.2px;height:1.2px;background:#b0b0b0"></div>
<div class="a" style="left:354.5px;top:644px;width:1.2px;height:1.2px;background:#b0b0b0"></div>
<div class="a" style="left:358.0px;top:644px;width:1.2px;height:1.2px;background:#b0b0b0"></div>
<div class="a" style="left:372px;top:631px;width:27px;height:21px;background:#efefef"></div>
<svg class="a" style="left:378px;top:634.0px" width="15" height="15" viewBox="0 0 15 15"><rect x="0.5" y="0.5" width="4.6" height="13.2" fill="none" stroke="#b4b4b4" stroke-width="1"/><rect x="2" y="11" width="1" height="1" fill="#b4b4b4"/><path d="M5.1 6.4L8.9 1.6L13.1 4.9L6.6 10.2" fill="none" stroke="#b4b4b4" stroke-width="1"/><path d="M7.1 3.9L11.1 7.1" stroke="#b4b4b4" stroke-width="0.9"/><path d="M5.1 9.2H13.6V13.7H5.1M8 9.4V13.6M10.8 9.4V13.6" fill="none" stroke="#b4b4b4" stroke-width="1"/></svg>
<svg class="a" style="left:342px;top:567px" width="12" height="12" viewBox="0 0 12 12"><rect width="12" height="12" fill="#b0b0b0"/><path d="M2.3 6.2L4.9 8.8L9.8 2.8" fill="none" stroke="#fff" stroke-width="1.7"/></svg>
<div class="t" style="left:357.6px;top:565.44px;font-size:11px;color:#a0a0a0;"><span id="s67" style="display:inline-block;transform:scaleX(1.017);transform-origin:0 50%">Placer à l'horizontal sur les portes</span></div>
<svg class="a" style="left:342px;top:584px" width="12" height="12" viewBox="0 0 12 12"><rect width="12" height="12" fill="#262626"/><path d="M2.3 6.2L4.9 8.8L9.8 2.8" fill="none" stroke="#fff" stroke-width="1.7"/></svg>
<div class="t" style="left:357.6px;top:582.44px;font-size:11px;"><span id="s68" style="display:inline-block;transform:scaleX(1.011);transform-origin:0 50%">Placer à l'horizontal sur les meubles hauts</span></div>
<svg class="a" style="left:647px;top:567px" width="12" height="12" viewBox="0 0 12 12"><rect width="12" height="12" fill="#b0b0b0"/><path d="M2.3 6.2L4.9 8.8L9.8 2.8" fill="none" stroke="#fff" stroke-width="1.7"/></svg>
<div class="t" style="left:662.4px;top:565.44px;font-size:11px;color:#a0a0a0;"><span id="s69" style="display:inline-block;transform:scaleX(1.029);transform-origin:0 50%">Placer à l'horizontal sur les tiroirs</span></div>
<div class="t" style="left:570.3px;top:609.04px;font-size:11px;"><span id="s70" style="display:inline-block;transform:scaleX(1.027);transform-origin:0 50%">Vitrée :</span></div>
<div class="t" style="left:570.3px;top:633.94px;font-size:11px;"><span id="s71" style="display:inline-block;transform:scaleX(1.049);transform-origin:0 50%">Petit :</span></div>
<div class="a" style="left:644px;top:605px;width:273px;height:21px;background:#eeeeee;border:1px solid #c6c6c6"></div>
<div class="t" style="left:649px;top:607.69px;font-size:11px;color:#646464;width:251px;overflow:hidden"><span id="s72" style="display:inline-block;transform:scaleX(1.017);transform-origin:0 50%">Comme la porte</span></div>
<svg class="a" style="left:901px;top:611.3px" width="13" height="8" viewBox="0 0 13 8"><path d="M0.6 0.8L6.5 6.8L12.4 0.8" fill="none" stroke="#707070" stroke-width="1.2"/></svg>
<div class="a" style="left:644px;top:631px;width:273px;height:21px;background:#eeeeee;border:1px solid #c6c6c6"></div>
<div class="t" style="left:649px;top:633.69px;font-size:11px;color:#646464;width:251px;overflow:hidden"><span id="s73" style="display:inline-block;transform:scaleX(1.038);transform-origin:0 50%">Comme le tiroir</span></div>
<svg class="a" style="left:901px;top:637.3px" width="13" height="8" viewBox="0 0 13 8"><path d="M0.6 0.8L6.5 6.8L12.4 0.8" fill="none" stroke="#707070" stroke-width="1.2"/></svg>
<div class="a" style="left:920px;top:605px;width:27px;height:21px;background:#efefef"></div>
<div class="a" style="left:929.0px;top:618px;width:1.2px;height:1.2px;background:#b0b0b0"></div>
<div class="a" style="left:932.5px;top:618px;width:1.2px;height:1.2px;background:#b0b0b0"></div>
<div class="a" style="left:936.0px;top:618px;width:1.2px;height:1.2px;background:#b0b0b0"></div>
<div class="a" style="left:950px;top:605px;width:27px;height:21px;background:#efefef"></div>
<svg class="a" style="left:956px;top:608.0px" width="15" height="15" viewBox="0 0 15 15"><rect x="0.5" y="0.5" width="4.6" height="13.2" fill="none" stroke="#b4b4b4" stroke-width="1"/><rect x="2" y="11" width="1" height="1" fill="#b4b4b4"/><path d="M5.1 6.4L8.9 1.6L13.1 4.9L6.6 10.2" fill="none" stroke="#b4b4b4" stroke-width="1"/><path d="M7.1 3.9L11.1 7.1" stroke="#b4b4b4" stroke-width="0.9"/><path d="M5.1 9.2H13.6V13.7H5.1M8 9.4V13.6M10.8 9.4V13.6" fill="none" stroke="#b4b4b4" stroke-width="1"/></svg>
<div class="a" style="left:920px;top:631px;width:27px;height:21px;background:#efefef"></div>
<div class="a" style="left:929.0px;top:644px;width:1.2px;height:1.2px;background:#b0b0b0"></div>
<div class="a" style="left:932.5px;top:644px;width:1.2px;height:1.2px;background:#b0b0b0"></div>
<div class="a" style="left:936.0px;top:644px;width:1.2px;height:1.2px;background:#b0b0b0"></div>
<div class="a" style="left:950px;top:631px;width:27px;height:21px;background:#efefef"></div>
<svg class="a" style="left:956px;top:634.0px" width="15" height="15" viewBox="0 0 15 15"><rect x="0.5" y="0.5" width="4.6" height="13.2" fill="none" stroke="#b4b4b4" stroke-width="1"/><rect x="2" y="11" width="1" height="1" fill="#b4b4b4"/><path d="M5.1 6.4L8.9 1.6L13.1 4.9L6.6 10.2" fill="none" stroke="#b4b4b4" stroke-width="1"/><path d="M7.1 3.9L11.1 7.1" stroke="#b4b4b4" stroke-width="0.9"/><path d="M5.1 9.2H13.6V13.7H5.1M8 9.4V13.6M10.8 9.4V13.6" fill="none" stroke="#b4b4b4" stroke-width="1"/></svg>
<div class="a" style="left:77px;top:570px;width:28px;height:28px;border-radius:50%;background:radial-gradient(circle at 40% 35%,#6a9ad8,#5587cf 70%);border:2px solid #4a8fe6;box-shadow:1px 3px 5px rgba(0,0,0,0.35);color:#fff;font-size:15px;font-weight:bold;line-height:23px;text-align:center">1</div>
<div class="a" style="left:77px;top:599px;width:28px;height:28px;border-radius:50%;background:radial-gradient(circle at 40% 35%,#6a9ad8,#5587cf 70%);border:2px solid #4a8fe6;box-shadow:1px 3px 5px rgba(0,0,0,0.35);color:#fff;font-size:15px;font-weight:bold;line-height:23px;text-align:center">2</div>
<div class="a" style="left:77px;top:628px;width:28px;height:28px;border-radius:50%;background:radial-gradient(circle at 40% 35%,#6a9ad8,#5587cf 70%);border:2px solid #4a8fe6;box-shadow:1px 3px 5px rgba(0,0,0,0.35);color:#fff;font-size:15px;font-weight:bold;line-height:23px;text-align:center">3</div>
<div class="a" style="left:568px;top:576px;width:28px;height:28px;border-radius:50%;background:radial-gradient(circle at 40% 35%,#6a9ad8,#5587cf 70%);border:2px solid #4a8fe6;box-shadow:1px 3px 5px rgba(0,0,0,0.35);color:#fff;font-size:15px;font-weight:bold;line-height:23px;text-align:center">4</div>
<div class="a" style="left:615px;top:599px;width:28px;height:28px;border-radius:50%;background:radial-gradient(circle at 40% 35%,#6a9ad8,#5587cf 70%);border:2px solid #4a8fe6;box-shadow:1px 3px 5px rgba(0,0,0,0.35);color:#fff;font-size:15px;font-weight:bold;line-height:23px;text-align:center">5</div>
<div class="a" style="left:615px;top:628px;width:28px;height:28px;border-radius:50%;background:radial-gradient(circle at 40% 35%,#6a9ad8,#5587cf 70%);border:2px solid #4a8fe6;box-shadow:1px 3px 5px rgba(0,0,0,0.35);color:#fff;font-size:15px;font-weight:bold;line-height:23px;text-align:center">6</div>
<div class="a" style="left:12px;top:662px;width:474px;height:59px;background:#fff;border:1px solid #ececec;border-top:0"></div>
<div class="t" style="left:15.4px;top:662.14px;font-size:11px;font-weight:bold;"><span id="s74" style="display:inline-block;transform:scaleX(0.967);transform-origin:0 50%">Crédence</span></div>
<svg class="a" style="left:20px;top:679px" width="12" height="12" viewBox="0 0 12 12"><rect width="12" height="12" fill="#b0b0b0"/><path d="M2.3 6.2L4.9 8.8L9.8 2.8" fill="none" stroke="#fff" stroke-width="1.7"/></svg>
<div class="t" style="left:35.6px;top:677.04px;font-size:11px;color:#a0a0a0;"><span id="s75" style="display:inline-block;transform:scaleX(1.024);transform-origin:0 50%">Affichage automatique</span></div>
<div class="t" style="left:20.6px;top:702.64px;font-size:11px;"><span id="s76" style="display:inline-block;transform:scaleX(1.017);transform-origin:0 50%">Positionnem...</span></div>
<div class="a" style="left:104px;top:698px;width:245px;height:21px;background:#eeeeee;border:1px solid #c6c6c6"></div>
<div class="t" style="left:109px;top:700.69px;font-size:11px;color:#646464;width:223px;overflow:hidden"><span id="s77" style="display:inline-block;transform:scaleX(1.031);transform-origin:0 50%">1500.0 Sous l'élément haut</span></div>
<svg class="a" style="left:333px;top:704.3px" width="13" height="8" viewBox="0 0 13 8"><path d="M0.6 0.8L6.5 6.8L12.4 0.8" fill="none" stroke="#707070" stroke-width="1.2"/></svg>
<div class="a" style="left:354px;top:698px;width:95px;height:21px;background:#eeeeee;border:1px solid #939393"></div>
<div class="t" style="left:359px;width:88px;overflow:hidden;top:700.69px;font-size:11px;color:#646464"><span id="s78" style="display:inline-block;transform:scaleX(1.096);transform-origin:0 50%">1500.0</span></div>
<div class="a" style="left:453px;top:698px;width:27px;height:21px;background:#cccccc"></div>
<svg class="a" style="left:459px;top:701.0px" width="15" height="15" viewBox="0 0 15 15"><rect x="0.5" y="0.5" width="4.6" height="13.2" fill="none" stroke="#1e1e1e" stroke-width="1"/><rect x="2" y="11" width="1" height="1" fill="#1e1e1e"/><path d="M5.1 6.4L8.9 1.6L13.1 4.9L6.6 10.2" fill="none" stroke="#1e1e1e" stroke-width="1"/><path d="M7.1 3.9L11.1 7.1" stroke="#1e1e1e" stroke-width="0.9"/><path d="M5.1 9.2H13.6V13.7H5.1M8 9.4V13.6M10.8 9.4V13.6" fill="none" stroke="#1e1e1e" stroke-width="1"/></svg>
<div class="a" style="left:650px;top:37px;width:334px;height:217px;background:#fff"></div>
<div class="a" style="left:651px;top:38px;width:331px;height:215px;background:#a0a0a0;box-shadow:inset 2px 2px 0 #a0a0a0, inset 3px 3px 0 #6a6a6a"></div>
<svg class="a" style="left:654px;top:41px" width="328" height="212" viewBox="654 41 328 212">
<defs>
<radialGradient id="bw" cx="880" cy="130" r="150" gradientUnits="userSpaceOnUse"><stop offset="0" stop-color="#dcdeda"/><stop offset="0.6" stop-color="#d3d5d0"/><stop offset="1" stop-color="#c9ccc6"/></radialGradient>
<linearGradient id="lw" x1="654" y1="0" x2="758" y2="0" gradientUnits="userSpaceOnUse"><stop offset="0" stop-color="#bcbeb8"/><stop offset="1" stop-color="#b5b7b1"/></linearGradient><radialGradient id="glow" cx="850" cy="150" r="60" gradientUnits="userSpaceOnUse"><stop offset="0" stop-color="#e6e7e4"/><stop offset="1" stop-color="#e6e7e4" stop-opacity="0"/></radialGradient>
<linearGradient id="fl" x1="0" y1="218" x2="0" y2="252" gradientUnits="userSpaceOnUse"><stop offset="0" stop-color="#8a7a70"/><stop offset="1" stop-color="#7a6a61"/></linearGradient>
<linearGradient id="cl" x1="0" y1="40" x2="0" y2="62" gradientUnits="userSpaceOnUse"><stop offset="0" stop-color="#cfcfcf"/><stop offset="1" stop-color="#c3c3c3"/></linearGradient>
</defs>
<rect x="654" y="41" width="328" height="212" fill="url(#bw)"/>
<rect x="790" y="90" width="120" height="75" fill="url(#glow)"/>
<polygon points="654,41 716,41 758,62 758,218 682,253 654,253" fill="url(#lw)"/>
<polygon points="716,41 982,41 982,49 758,62" fill="url(#cl)"/>
<path d="M716 41L758 62L982 49" fill="none" stroke="#8e908c" stroke-width="0.8"/>
<polygon points="682,253 758,218 982,230.5 982,253" fill="url(#fl)"/>
<path d="M690 248L980 246M705 242L980 241M720 236L980 237M735 231L980 233M700 250L900 251" stroke="#6a5b53" stroke-width="0.8" opacity="0.45"/><path d="M695 245L960 243M712 239L970 239M728 233L975 235" stroke="#9a887c" stroke-width="0.7" opacity="0.35"/>
<!-- light strip -->
<rect x="792.7" y="85" width="11" height="79" fill="#e1e2df"/>
<line x1="803.5" y1="127" x2="803.5" y2="163" stroke="#b9bab6" stroke-width="0.8"/>
<!-- ghost outline -->
<path d="M767.3 76.7L780.7 81.9V85.4" fill="none" stroke="#9a9c98" stroke-width="0.7"/>
<polygon points="767.3,76.7 780.7,81.9 780.7,85.4 767.3,85.4" fill="#dcdddb"/>
<!-- tall cabinets -->
<polygon points="742.7,76.7 767.3,76.7 767.3,216 742.7,215.5" fill="#646661"/>
<polygon points="767.3,85.4 792.7,85.4 792.7,217 767.3,216.5" fill="#676964"/>
<line x1="767.3" y1="77" x2="767.3" y2="216" stroke="#3e403c" stroke-width="1"/>
<line x1="792.3" y1="85.4" x2="792.3" y2="217" stroke="#3e403c" stroke-width="1"/>
<line x1="747.2" y1="161" x2="761.3" y2="161" stroke="#a9aaa6" stroke-width="1"/>
<line x1="771.8" y1="161.5" x2="786" y2="161.5" stroke="#a9aaa6" stroke-width="1"/>
<!-- plinth -->
<polygon points="743.8,215.5 876.7,220 876.7,231.4 743.8,224.7" fill="#5d5f5a"/>
<polygon points="876.7,220 888,219 888,229.5 876.7,231.4" fill="#686a65"/>
<!-- countertop -->
<polygon points="791.9,163.4 894.6,163.4 894.6,167.5 791.9,167.5" fill="#8d7c6f"/>
<line x1="791.9" y1="163.8" x2="894.6" y2="163.8" stroke="#a8968a" stroke-width="0.8"/>
<!-- base door -->
<rect x="792.5" y="167.5" width="39.4" height="51.4" fill="#686a65"/>
<line x1="804" y1="170.5" x2="819" y2="170.5" stroke="#a9aaa6" stroke-width="1"/>
<!-- drawers -->
<rect x="832.5" y="167.8" width="34.4" height="52.2" fill="#686a65"/>
<path d="M832 167.8V220M832.5 181.3H867M832.5 200.4H867" stroke="#393b37" stroke-width="0.9"/>
<line x1="842" y1="175" x2="857" y2="175" stroke="#a9aaa6" stroke-width="1"/>
<line x1="842" y1="185.5" x2="857" y2="185.5" stroke="#a9aaa6" stroke-width="1"/>
<line x1="842" y1="205" x2="857" y2="205" stroke="#a9aaa6" stroke-width="1"/>
<!-- shelf unit -->
<rect x="866.9" y="167.5" width="25.7" height="52.5" fill="#676964"/>
<polygon points="866.9,167.5 873.1,167.5 873.1,218 866.9,220" fill="#4f514c"/>
<path d="M868 183.7H891.6M868 201H891.6M868 217H891.6" stroke="#7b7d78" stroke-width="1.8"/>
<path d="M868 185.3H891.6M868 202.6H891.6M868 218.6H891.6" stroke="#4a4c47" stroke-width="0.8"/>
<line x1="892" y1="167.5" x2="892" y2="218" stroke="#4a4c47" stroke-width="0.8"/>
<!-- wall cabinet -->
<rect x="797.9" y="87.2" width="38.4" height="39.5" fill="#646661"/>
<line x1="809" y1="123" x2="823.3" y2="123" stroke="#a9aaa6" stroke-width="1"/>
<rect x="836.3" y="84.9" width="35.2" height="41.8" fill="#cfcfcf"/>
<rect x="838.5" y="87" width="30.5" height="37.5" fill="#bdbdbc"/>
<line x1="870.6" y1="85" x2="870.6" y2="126.7" stroke="#4a4a4a" stroke-width="1.8"/>
<line x1="836.3" y1="126.3" x2="871.5" y2="126.3" stroke="#6a6a6a" stroke-width="0.8"/>
<path d="M840 100.8H868M840 113.7H868" stroke="#e6e6e6" stroke-width="1.4"/>
<ellipse cx="854" cy="98" rx="6.5" ry="2.2" fill="#eeeeee"/>
<ellipse cx="854" cy="95" rx="3.5" ry="2" fill="#f2f2f2"/>
<path d="M846.5 104.5H861.5V108H846.5Z" fill="#ededed"/>
<path d="M848.5 108V112.5M852.5 108V112.5M856.5 108V112.5M860 108V112.5" stroke="#e6e6e6" stroke-width="0.8"/>
<path d="M846 118H862L859 123.5H849Z" fill="#ededed"/>
</svg>

<div class="t" style="left:651.5px;top:258.14px;font-size:11px;"><span id="s79" style="display:inline-block;transform:scaleX(1.007);transform-origin:0 50%">Double-cliquez sur un objet de l'aperçu ci-dessus pour changer le</span></div>
<div class="t" style="left:651.5px;top:273.14px;font-size:11px;"><span id="s80" style="display:inline-block;transform:scaleX(0.987);transform-origin:0 50%">modèle</span></div>
<div class="a" style="left:650px;top:305px;width:334px;height:154px;background:#fff"></div>
<div class="a" style="left:651px;top:306px;width:331px;height:151px;background:#a2a2a2;box-shadow:inset 2px 2px 0 #a3a3a3, inset 3px 3px 0 #6e6e6e"></div>
<svg class="a" style="left:654px;top:309px" width="328" height="148" viewBox="654 309 328 148">
<defs>
<clipPath id="lf"><polygon points="706.1,367.7 817.5,397.9 817.5,434 707.5,398.3"/></clipPath>
<clipPath id="rf"><polygon points="817.5,397.9 928.4,367.7 928,398.3 817.5,434"/></clipPath>
<radialGradient id="tg" cx="817" cy="372" r="90" gradientUnits="userSpaceOnUse"><stop offset="0" stop-color="#8f8279"/><stop offset="1" stop-color="#86796f"/></radialGradient>
</defs>
<rect x="654" y="309" width="328" height="148" fill="#a3a3a3"/>
<polygon points="817.9,345.2 928.4,367.7 817.5,397.9 706.1,367.7" fill="url(#tg)"/>
<polygon points="706.1,367.7 817.5,397.9 817.5,434 707.5,398.3" fill="#8b7e76"/>
<polygon points="817.5,397.9 928.4,367.7 928,398.3 817.5,434" fill="#8a7d75"/>
<g clip-path="url(#lf)">
<path d="M713 360V440M731 360V440M744 360V440M769 360V440M795 360V440M809 360V440" stroke="#7a6d66" stroke-width="4" opacity="0.22"/>
<path d="M721 360V440M752 360V440M779 360V440M801 360V440" stroke="#9c8f86" stroke-width="5" opacity="0.2"/>
</g>
<g clip-path="url(#rf)">
<path d="M826 360V440M845 360V440M872 360V440M893 360V440M915 360V440" stroke="#7a6d66" stroke-width="4" opacity="0.22"/>
<path d="M835 360V440M860 360V440M884 360V440M906 360V440" stroke="#9a8d84" stroke-width="5" opacity="0.2"/>
</g>
<path d="M706.1 367.7L817.9 345.2L928.4 367.7L817.5 397.9Z" fill="none" stroke="#4e433c" stroke-width="0.9"/>
<path d="M706.1 367.7L707.5 398.3L817.5 434L928 398.3L928.4 367.7M817.5 397.9V434" fill="none" stroke="#5e524a" stroke-width="0.7"/>
</svg>

<div class="a" style="left:651px;top:467px;width:333px;height:42px;background:#efefef;border:1px solid #a8a8a8"></div>
<div class="t" style="left:656.4px;top:471.44px;font-size:11px;color:#707070;"><span id="s81" style="display:inline-block;transform:scaleX(0.980);transform-origin:0 50%">Cover shelf edge</span></div>
<div class="a" style="left:513px;top:687px;width:146px;height:25px;background:#cccccc"></div>
<div class="t" style="left:513px;width:146px;text-align:center;top:691.08px;font-size:11.3px;color:#2a2a2a"><span id="s82" style="display:inline-block;transform:scaleX(0.948);transform-origin:50% 50%">Dimensions...</span></div>
<div class="a" style="left:734px;top:687px;width:81px;height:25px;background:#f2b94b"></div>
<div class="t" style="left:734px;width:81px;text-align:center;top:691.08px;font-size:11.3px;color:#2a2a2a"><span id="s83" style="display:inline-block;transform:scaleX(0.870);transform-origin:50% 50%">OK</span></div>
<div class="a" style="left:818px;top:687px;width:81px;height:25px;background:#cccccc"></div>
<div class="t" style="left:818px;width:81px;text-align:center;top:691.08px;font-size:11.3px;color:#2a2a2a"><span id="s84" style="display:inline-block;transform:scaleX(0.968);transform-origin:50% 50%">Annuler</span></div>
<div class="a" style="left:903px;top:687px;width:81px;height:25px;background:#cccccc"></div>
<div class="t" style="left:903px;width:81px;text-align:center;top:691.08px;font-size:11.3px;color:#2a2a2a"><span id="s85" style="display:inline-block;transform:scaleX(0.950);transform-origin:50% 50%">Aide</span></div>
</body></html>
